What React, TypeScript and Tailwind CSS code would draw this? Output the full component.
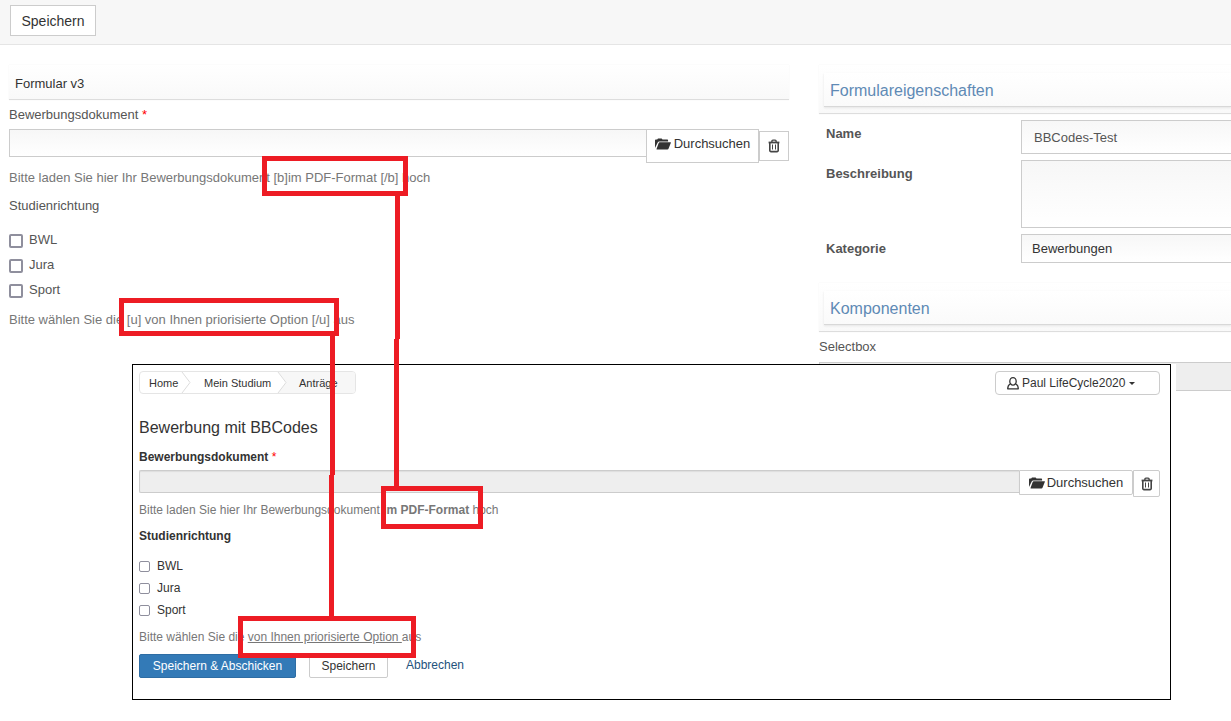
import { ReactNode } from 'react';

const OPTIONS = ['BWL', 'Jura', 'Sport'];

function FolderIcon() {
    return (
        <svg width="16" height="12" viewBox="0 0 16 12" fill="#333" aria-hidden="true">
            <path d="M0 10V2.6C0 2 .5 1.6 1 1.6h1.2L3 .4h3.6l.9 1.2h4.9c.4 0 .7.3.7.8v1H4.2c-.7 0-1.2.3-1.5 1z" />
            <path d="M4.6 4.2h11c.3 0 .4.2.3.5l-2.4 6c-.2.5-.5.8-1 .8H1.8c-.3 0-.4-.2-.3-.5l2.2-6c.2-.5.5-.8.9-.8z" />
        </svg>
    );
}

function TrashIcon() {
    return (
        <svg
            width="12"
            height="14"
            viewBox="0 0 12 14"
            fill="none"
            stroke="#444"
            aria-hidden="true"
        >
            <path d="M.6 3.5h10.8" strokeWidth="1.8" />
            <path d="M3.9 3V2.1c0-.6.4-1 1-1h2.2c.6 0 1 .4 1 1V3" strokeWidth="1.4" />
            <path d="M1.8 4v7.6c0 .7.4 1 1 1h6.4c.6 0 1-.3 1-1V4" strokeWidth="1.6" />
            <path d="M4.5 5.5v5M7.5 5.5v5" strokeWidth="1" />
        </svg>
    );
}

function UserIcon() {
    return (
        <svg
            width="12"
            height="13"
            viewBox="0 0 12 13"
            fill="none"
            stroke="#333"
            strokeWidth="1.3"
            strokeLinejoin="round"
            aria-hidden="true"
        >
            <ellipse cx="6" cy="4.4" rx="3.2" ry="3.7" />
            <path d="M3.3 7C1.6 7.6.8 9 .7 11.8h10.6C11.2 9 10.4 7.6 8.7 7" />
        </svg>
    );
}

function PanelHeader({ children }: { children: ReactNode }) {
    return (
        <div className="h-[49px] border-b border-[#ddd] bg-linear-to-b from-white to-[#f9f9f9] pt-2 pl-[5px] shadow-[0_0_1px_#eee]">
            <h2 className="h-[34px] border-b border-[#d8d8d8] bg-linear-to-b from-white to-[#fafafa] pl-1.5 text-base leading-[35px] text-[#5f8ab5] shadow-[0_1px_2px_#e5e5e5]">
                {children}
            </h2>
        </div>
    );
}

function FormEditor() {
    return (
        <section className="min-w-0 flex-1 text-[13px] text-[#555]">
            <h1 className="h-[35px] border-b border-[#ddd] bg-linear-to-b from-white to-[#f9f9f9] pl-1.5 leading-[37px] text-[#333] shadow-[0_0_1px_#eee]">
                Formular v3
            </h1>
            <label htmlFor="editor-file" className="block leading-[29px]">
                Bewerbungsdokument <span className="text-[#f00]">*</span>
            </label>
            <div className="flex h-[34px] items-start">
                <input
                    id="editor-file"
                    type="text"
                    className="h-7 min-w-0 flex-1 border border-r-0 border-[#ccc] bg-linear-to-b from-[#f7f7f7] to-white px-3"
                />
                <button
                    type="button"
                    className="flex h-[34px] w-[113px] justify-center gap-[3px] border border-[#ccc] bg-white pt-1 text-[#333]"
                >
                    <span className="pt-1">
                        <FolderIcon />
                    </span>
                    Durchsuchen
                </button>
                <button
                    type="button"
                    aria-label="Löschen"
                    className="mt-0.5 flex h-[30px] w-[30px] items-center justify-center border border-[#ccc] bg-white"
                >
                    <TrashIcon />
                </button>
            </div>
            <p className="leading-[29px] text-[#777]">
                Bitte laden Sie hier Ihr Bewerbungsdokument [b]im PDF-Format [/b] hoch
            </p>
            <fieldset>
                <legend className="leading-7">Studienrichtung</legend>
                <div className="mt-[7px]">
                    {OPTIONS.map((option) => (
                        <label key={option} className="flex h-[25px] items-center gap-1.5">
                            <input
                                type="checkbox"
                                className="mt-0.5 h-3.5 w-3.5 appearance-none rounded-xs border-2 border-[#8f8f9d] bg-white"
                            />
                            {option}
                        </label>
                    ))}
                </div>
            </fieldset>
            <p className="leading-9 text-[#777]">
                Bitte wählen Sie die [u] von Ihnen priorisierte Option [/u] aus
            </p>
        </section>
    );
}

function Properties() {
    return (
        <aside className="w-[412px] shrink-0 text-[13px] text-[#555]">
            <PanelHeader>Formulareigenschaften</PanelHeader>
            <div className="mt-1.5 grid grid-cols-[195px_1fr] gap-y-1.5 pl-[7px]">
                <label htmlFor="name" className="font-bold leading-[27px]">
                    Name
                </label>
                <input
                    id="name"
                    type="text"
                    defaultValue="BBCodes-Test"
                    className="h-[34px] w-full border border-r-0 border-[#ccc] bg-linear-to-b from-[#f7f7f7] to-white px-3"
                />
                <label htmlFor="description" className="font-bold leading-[27px]">
                    Beschreibung
                </label>
                <textarea
                    id="description"
                    className="block h-[68px] w-full resize-none border border-r-0 border-[#ccc] bg-linear-to-b from-[#f7f7f7] to-white px-3"
                />
                <label htmlFor="category" className="font-bold leading-[29px]">
                    Kategorie
                </label>
                <select
                    id="category"
                    className="h-[29px] w-full appearance-none border border-r-0 border-[#ccc] bg-linear-to-b from-[#f7f7f7] to-white px-2.5 text-[#333]"
                >
                    <option>Bewerbungen</option>
                </select>
            </div>
            <div className="mt-5">
                <PanelHeader>Komponenten</PanelHeader>
            </div>
            <label htmlFor="component" className="block leading-[30px]">
                Selectbox
            </label>
            <select
                id="component"
                disabled
                className="block h-[29px] w-full appearance-none border border-r-0 border-[#ccc] bg-[#eee]"
            />
        </aside>
    );
}

function Breadcrumb() {
    return (
        <nav className="relative flex h-[23px] w-[217px] overflow-hidden rounded-sm border border-[#e5e5e5] text-[11px] leading-[23px] text-[#333]">
            <a href="#home" className="w-[54px] pl-[9px]">
                Home
            </a>
            <a href="#studium" className="flex-1 pl-2.5">
                Mein Studium
            </a>
            <a href="#antraege" className="w-[68px] bg-[#f7f7f7] pl-3">
                Anträge
            </a>
            <svg
                className="absolute top-0 left-0"
                width="160"
                height="21"
                viewBox="0 0 160 21"
                fill="none"
                stroke="#ddd"
                aria-hidden="true"
            >
                <path d="M138 0l8 10.5L138 21h12V0z" fill="#f7f7f7" stroke="none" />
                <path d="M42 0l8 10.5L42 21M138 0l8 10.5L138 21" />
            </svg>
        </nav>
    );
}

function Preview() {
    return (
        <div className="absolute top-[364px] right-[55px] left-[132px] bg-white pr-[5px]">
            <div className="border border-black pt-1.5 pr-2.5 pb-[21px] pl-1.5 text-xs text-[#333]">
                <div className="flex h-6 items-start justify-between">
                    <Breadcrumb />
                    <button
                        type="button"
                        className="flex h-6 w-[165px] items-center rounded-sm border border-[#ccc] bg-white pl-[11px]"
                    >
                        <UserIcon />
                        <span className="pl-[3px]">Paul LifeCycle2020</span>
                        <span className="ml-1 border-x-3 border-t-3 border-x-transparent border-t-[#333]" />
                    </button>
                </div>
                <h2 className="mt-4 text-base leading-[34px]">Bewerbung mit BBCodes</h2>
                <label htmlFor="preview-file" className="block font-bold leading-[25px]">
                    Bewerbungsdokument <span className="font-normal text-[#f00]">*</span>
                </label>
                <div className="flex h-[27px] items-start">
                    <input
                        id="preview-file"
                        type="text"
                        readOnly
                        className="h-[23px] min-w-0 flex-1 rounded-l-xs border border-r-0 border-[#ccc] bg-[#eee] px-2 shadow-[inset_0_1px_1px_#ddd]"
                    />
                    <button
                        type="button"
                        className="flex h-[25px] w-[114px] items-center justify-center gap-0.5 rounded-r-xs border border-[#ccc] bg-white text-[13px]"
                    >
                        <FolderIcon />
                        Durchsuchen
                    </button>
                    <button
                        type="button"
                        aria-label="Löschen"
                        className="flex h-[27px] w-[27px] items-center justify-center rounded-r-xs border border-[#ccc] bg-white"
                    >
                        <TrashIcon />
                    </button>
                </div>
                <p className="leading-[27px] text-[#777]">
                    Bitte laden Sie hier Ihr Bewerbungsdokument <b>im PDF-Format</b> hoch
                </p>
                <fieldset>
                    <legend className="font-bold leading-[25px]">Studienrichtung</legend>
                    <div className="mt-1.5">
                        {OPTIONS.map((option) => (
                            <label key={option} className="flex h-[22px] items-center gap-[7px]">
                                <input
                                    type="checkbox"
                                    className="h-[11px] w-[11px] appearance-none rounded-xs border border-[#8f8f9d] bg-white"
                                />
                                {option}
                            </label>
                        ))}
                    </div>
                </fieldset>
                <p className="leading-[33px] text-[#777]">
                    Bitte wählen Sie die <u>von Ihnen priorisierte Option </u>aus
                </p>
                <div className="flex h-6 items-start">
                    <button
                        type="button"
                        className="h-6 w-[157px] rounded-xs border border-[#2e6da4] bg-[#337ab7] text-white"
                    >
                        Speichern &amp; Abschicken
                    </button>
                    <button
                        type="button"
                        className="ml-[13px] h-6 w-[79px] rounded-xs border border-[#ccc] bg-white"
                    >
                        Speichern
                    </button>
                    <a href="#abbrechen" className="ml-[18px] leading-[22px] text-[#23527c]">
                        Abbrechen
                    </a>
                </div>
            </div>
        </div>
    );
}

// Red frames and connectors from each BBCode to its rendered result
function Annotations() {
    return (
        <svg
            className="pointer-events-none absolute top-0 left-0"
            width="500"
            height="700"
            viewBox="0 0 500 700"
            fill="none"
            stroke="#ed1c24"
            strokeWidth="5"
            aria-hidden="true"
        >
            <rect x="264.5" y="158.5" width="141" height="35" />
            <path d="M397.5 194v145M396.5 339v149" />
            <rect x="383.5" y="488.5" width="97" height="38" />
            <rect x="121.5" y="300.5" width="215" height="33" />
            <path d="M332.5 334v141M331.5 475v143" />
            <rect x="240.5" y="618.5" width="173" height="37" />
        </svg>
    );
}

export default function App() {
    return (
        <div className="relative min-h-screen overflow-hidden bg-white font-['Liberation_Sans',Arial,sans-serif]">
            <header className="h-[45px] border-b border-[#e5e5e5] bg-[#f7f7f7] px-2.5 pt-[5px]">
                <button
                    type="button"
                    className="h-[31px] w-[86px] border border-[#ccc] bg-white text-sm text-[#333]"
                >
                    Speichern
                </button>
            </header>
            <main className="flex gap-[30px] pt-5 pl-[9px]">
                <FormEditor />
                <Properties />
            </main>
            <Preview />
            <Annotations />
        </div>
    );
}
